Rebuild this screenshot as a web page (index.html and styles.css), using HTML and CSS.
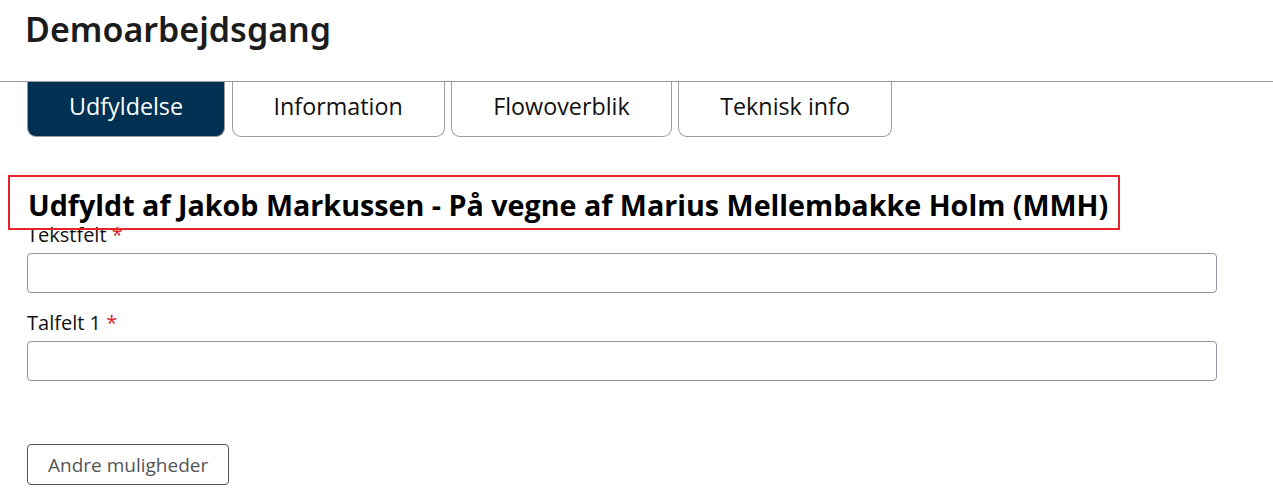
FILE: index.html
```html
<!DOCTYPE html>
<html lang="da">
<head>
<meta charset="utf-8">
<title>Demoarbejdsgang</title>
<link rel="stylesheet" href="styles.css">
</head>
<body>
<header class="page-header">
  <h1 class="page-title">Demoarbejdsgang</h1>
</header>
<nav class="tabs">
  <a class="tab tab-active">Udfyldelse</a>
  <a class="tab">Information</a>
  <a class="tab">Flowoverblik</a>
  <a class="tab">Teknisk info</a>
</nav>
<main class="content">
  <h2 class="filled-by">Udfyldt af Jakob Markussen - På vegne af Marius Mellembakke Holm (MMH)</h2>
  <form class="form">
    <div class="field">
      <label class="label">Tekstfelt <span class="req">*</span></label>
      <input class="input" type="text">
    </div>
    <div class="field">
      <label class="label">Talfelt 1 <span class="req">*</span></label>
      <input class="input" type="text">
    </div>
    <div class="actions">
      <button type="button" class="btn">Andre muligheder</button>
    </div>
  </form>
</main>
</body>
</html>
```

FILE: styles.css
```css
* { box-sizing: border-box; }
html, body { margin: 0; padding: 0; background: #fff; }
body {
  font-family: "Open Sans", "Noto Sans", sans-serif;
  color: #1a1a1a;
  width: 1273px;
  overflow: hidden;
}
.page-header {
  height: 82px;
  border-bottom: 1px solid #9a9a9a;
  padding: 6px 0 0 25px;
}
.page-title {
  margin: 0;
  font-family: "Noto Sans", "Open Sans", sans-serif;
  font-size: 34px;
  font-weight: 600;
  line-height: 1.362;
  color: #1c1c1c;
}
.tabs {
  display: flex;
  gap: 6.5px;
  padding-left: 27px;
}
.tab {
  display: flex;
  align-items: center;
  justify-content: center;
  height: 55px;
  padding: 0 41px 6px;
  font-size: 23.3px;
  color: #111;
  border: 1px solid #9a9a9a;
  border-top: none;
  border-radius: 0 0 9px 9px;
  background: #fff;
}
.tab-active {
  background: #003152;
  color: #fff;
}
.content {
  padding: 38px 0 0 8px;
}
.filled-by {
  display: inline-block;
  margin: 0;
  padding: 9px 10px 5px 18px;
  border: 2px solid #e8232a;
  font-family: "Open Sans", "Noto Sans", sans-serif;
  font-weight: 700;
  font-size: 28.7px;
  line-height: 37px;
  color: #000;
  position: relative;
  z-index: 1;
}
.form {
  padding-left: 19px;
  width: 1209px;
}
.field {
  display: flex;
  flex-direction: column;
}
.label {
  font-size: 20px;
  line-height: 22px;
  color: #111;
  margin-top: -6px;
  margin-bottom: 7px;
}
.field + .field .label {
  margin-top: 19px;
}
.req { color: #d9232a; }
.input {
  height: 40px;
  border: 1px solid #8c96a0;
  border-radius: 4px;
  width: 100%;
  font: inherit;
}
.actions {
  margin-top: 63px;
}
.btn {
  height: 41px;
  padding: 0 20px;
  font-family: "Open Sans", "Noto Sans", sans-serif;
  font-size: 19px;
  color: #555;
  background: #fff;
  border: 1px solid #555;
  border-radius: 4px;
}
```
